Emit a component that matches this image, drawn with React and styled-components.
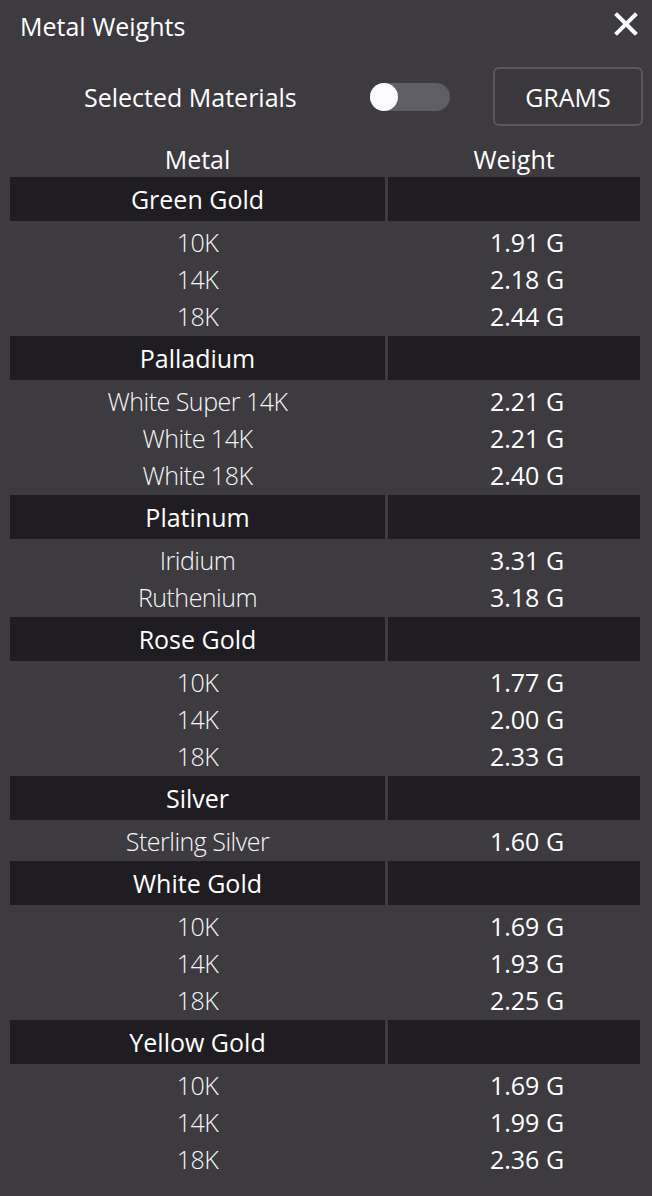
import React, { useState } from "react";
import styled, { createGlobalStyle } from "styled-components";

const Global = createGlobalStyle`
  html, body { margin: 0; padding: 0; background: #3d3b40; }
  body { font-family: "Open Sans", "Noto Sans", sans-serif; color: #ffffff; }
`;

const Panel = styled.div`
  width: 652px;
  min-height: 1196px;
  background: #3d3b40;
  box-sizing: border-box;
`;

const TitleBar = styled.div`
  height: 52px;
  display: flex;
  align-items: center;
  justify-content: space-between;
  padding: 0 14px 0 20px;
`;

const Title = styled.div`
  font-size: 25px;
  font-weight: 400;
`;

const CloseButton = styled.button`
  width: 24px;
  height: 24px;
  padding: 0;
  border: none;
  background: transparent;
  display: flex;
  align-items: center;
  justify-content: center;
  margin-top: -4px;
`;

const Controls = styled.div`
  display: flex;
  align-items: center;
  height: 59px;
  margin-top: 15px;
  padding-left: 84px;
`;

const ControlLabel = styled.div`
  width: 286px;
  font-size: 25px;
`;

const Track = styled.div`
  width: 80px;
  height: 28px;
  border-radius: 14px;
  background: #5f5d66;
  display: flex;
  align-items: center;
  justify-content: ${(p) => (p.$on ? "flex-end" : "flex-start")};
`;

const Knob = styled.div`
  width: 28px;
  height: 28px;
  border-radius: 50%;
  background: #fbfbfd;
`;

const UnitButton = styled.button`
  margin-left: 43px;
  width: 150px;
  height: 59px;
  box-sizing: border-box;
  border: 2px solid #5a585e;
  border-radius: 6px;
  background: #3a383d;
  color: #ffffff;
  font-family: inherit;
  font-size: 25px;
`;

const Columns = styled.div`
  display: grid;
  grid-template-columns: 375px 252px;
  column-gap: 3px;
  margin: 15px 10px 0 10px;
  height: 36px;
  align-items: center;
  font-size: 25px;
  text-align: center;
`;

const Table = styled.div`
  margin: 0 10px;
  width: 630px;
`;

const GroupHeader = styled.div`
  display: grid;
  grid-template-columns: 375px 252px;
  column-gap: 3px;
  height: 44px;
`;

const HeaderCell = styled.div`
  background: #1f1d22;
  display: flex;
  align-items: center;
  justify-content: center;
  font-size: 25px;
  font-weight: 500;
`;

const Rows = styled.div`
  padding: 2px 0;
`;

const Row = styled.div`
  display: grid;
  grid-template-columns: 375px 252px;
  column-gap: 3px;
  height: 37px;
  align-items: center;
  font-size: 25px;
`;

const NameCell = styled.div`
  text-align: center;
  font-weight: 300;
  letter-spacing: -0.5px;
  color: #f6f6f8;
`;

const WeightCell = styled.div`
  text-align: center;
  padding-left: 26px;
  font-weight: 400;
`;

const groups = [
  { name: "Green Gold", items: [["10K", "1.91 G"], ["14K", "2.18 G"], ["18K", "2.44 G"]] },
  { name: "Palladium", items: [["White Super 14K", "2.21 G"], ["White 14K", "2.21 G"], ["White 18K", "2.40 G"]] },
  { name: "Platinum", items: [["Iridium", "3.31 G"], ["Ruthenium", "3.18 G"]] },
  { name: "Rose Gold", items: [["10K", "1.77 G"], ["14K", "2.00 G"], ["18K", "2.33 G"]] },
  { name: "Silver", items: [["Sterling Silver", "1.60 G"]] },
  { name: "White Gold", items: [["10K", "1.69 G"], ["14K", "1.93 G"], ["18K", "2.25 G"]] },
  { name: "Yellow Gold", items: [["10K", "1.69 G"], ["14K", "1.99 G"], ["18K", "2.36 G"]] },
];

export default function App() {
  const [on, setOn] = useState(false);
  return (
    <Panel>
      <Global />
      <TitleBar>
        <Title>Metal Weights</Title>
        <CloseButton aria-label="Close">
          <svg width="24" height="24" viewBox="0 0 24 24">
            <path d="M3 3 L21 21 M21 3 L3 21" stroke="#ffffff" strokeWidth="4" strokeLinecap="square" />
          </svg>
        </CloseButton>
      </TitleBar>
      <Controls>
        <ControlLabel>Selected Materials</ControlLabel>
        <Track $on={on} onClick={() => setOn(!on)}>
          <Knob />
        </Track>
        <UnitButton>GRAMS</UnitButton>
      </Controls>
      <Columns>
        <div>Metal</div>
        <div>Weight</div>
      </Columns>
      <Table>
        {groups.map((g) => (
          <div key={g.name}>
            <GroupHeader>
              <HeaderCell>{g.name}</HeaderCell>
              <HeaderCell />
            </GroupHeader>
            <Rows>
              {g.items.map(([n, w]) => (
                <Row key={n}>
                  <NameCell>{n}</NameCell>
                  <WeightCell>{w}</WeightCell>
                </Row>
              ))}
            </Rows>
          </div>
        ))}
      </Table>
    </Panel>
  );
}
